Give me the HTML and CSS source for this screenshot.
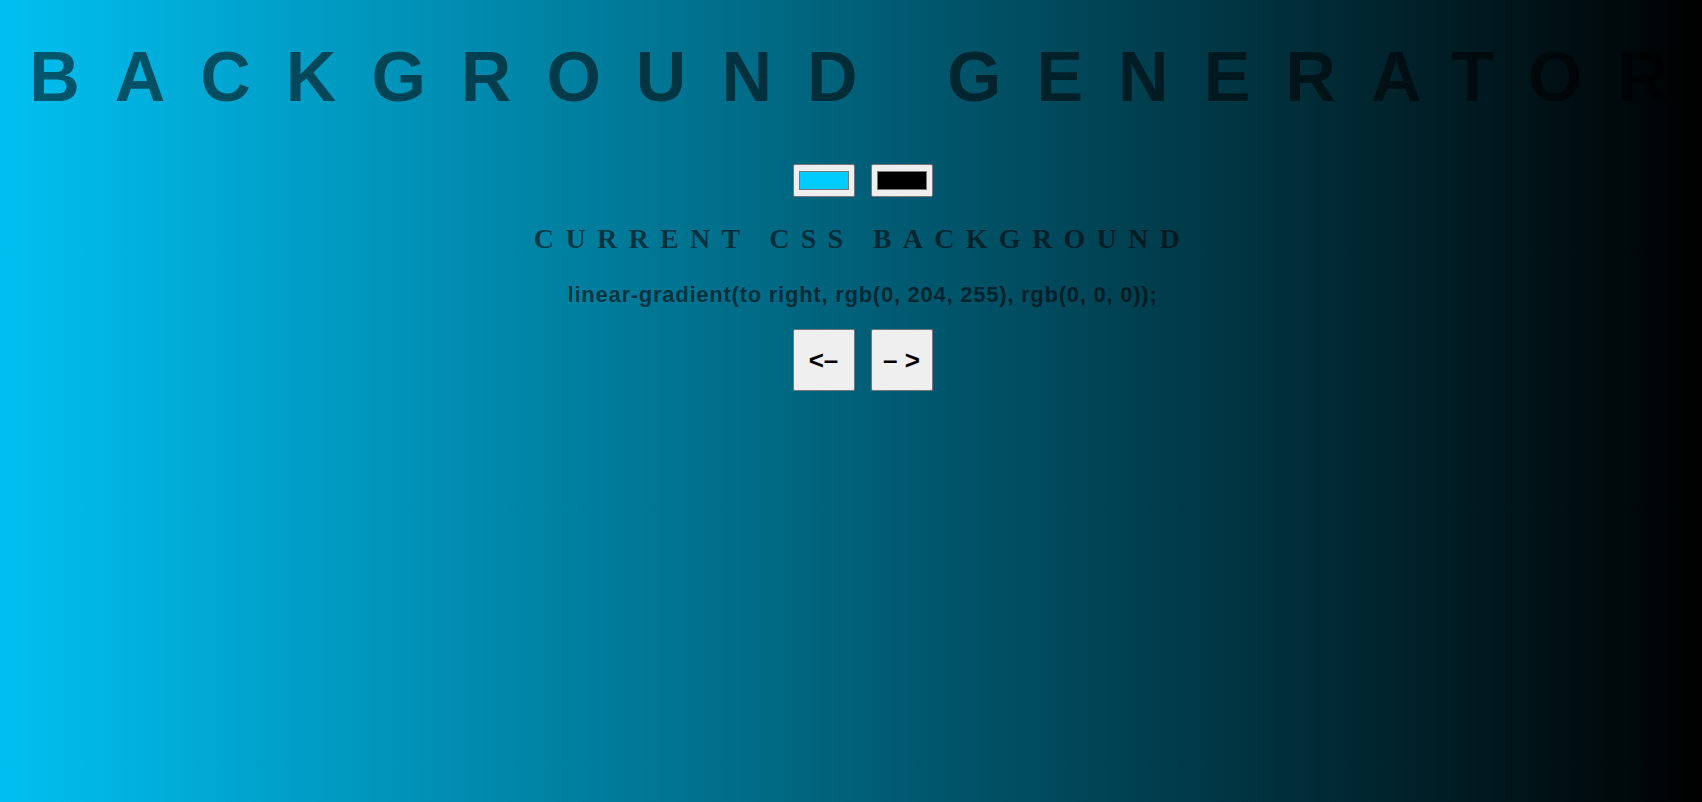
FILE: index.html
```html
<!DOCTYPE html>
<html lang="en">
<head>
<meta charset="utf-8">
<title>Background Generator</title>
<link rel="stylesheet" href="styles.css">
</head>
<body>
<main class="app">
  <h1 class="title">Background Generator</h1>
  <div class="pickers">
    <input class="picker" type="color" value="#00ccff">
    <input class="picker" type="color" value="#000000">
  </div>
  <h3 class="label">Current CSS Background</h3>
  <p class="code">linear-gradient(to right, rgb(0, 204, 255), rgb(0, 0, 0));</p>
  <div class="controls">
    <button class="btn" type="button">&lt;–</button>
    <button class="btn" type="button">– &gt;</button>
  </div>
</main>
</body>
</html>
```
FILE: styles.css
```css
html {
  background: linear-gradient(to right, rgb(0, 192, 241), rgb(0, 0, 0));
  min-height: 100%;
}

body {
  margin: 0;
  min-height: 100vh;
  background: linear-gradient(to right, rgb(0, 192, 241), rgb(0, 0, 0));
}

.app {
  padding: 1px 8px 0 31px;
  display: flex;
  flex-direction: column;
  align-items: center;
  text-align: center;
}

.title {
  align-self: stretch;
  margin: 36px -44px 0 -37px;
  font-family: "Liberation Sans", Arial, sans-serif;
  font-weight: 700;
  font-size: 70px;
  line-height: 80px;
  letter-spacing: 35px;
  text-transform: uppercase;
  white-space: nowrap;
  color: rgba(0, 0, 0, 0.54);
}

.pickers {
  display: flex;
  gap: 16px;
  margin-top: 47px;
}

.picker {
  -webkit-appearance: none;
  appearance: none;
  box-sizing: border-box;
  width: 62px;
  height: 33px;
  padding: 0;
  margin: 0;
  border: 1px solid #767676;
  border-radius: 2px;
  background: #efefef;
  cursor: pointer;
}

.picker::-webkit-color-swatch-wrapper {
  padding: 6px 5px;
}

.picker::-webkit-color-swatch {
  border: 1px solid #777777;
  border-radius: 0;
}

.label {
  margin: 26px 0 0;
  font-family: "Liberation Serif", "Times New Roman", serif;
  font-weight: 700;
  font-size: 28px;
  line-height: 32px;
  letter-spacing: 11.3px;
  text-transform: uppercase;
  color: rgba(0, 0, 0, 0.56);
}

.code {
  margin: 28px 0 0;
  font-family: "Liberation Sans", Arial, sans-serif;
  font-weight: 700;
  font-size: 22px;
  line-height: 24px;
  letter-spacing: 0.75px;
  color: rgba(0, 0, 0, 0.58);
}

.controls {
  display: flex;
  gap: 16px;
  margin-top: 22px;
}

.btn {
  box-sizing: border-box;
  width: 62px;
  height: 62px;
  margin: 0;
  padding: 0;
  border: 1px solid #767676;
  border-radius: 2px;
  background: #efefef;
  color: #000;
  font-family: "Liberation Sans", Arial, sans-serif;
  font-weight: 700;
  font-size: 26px;
  line-height: 1;
  white-space: nowrap;
  cursor: pointer;
}
```
